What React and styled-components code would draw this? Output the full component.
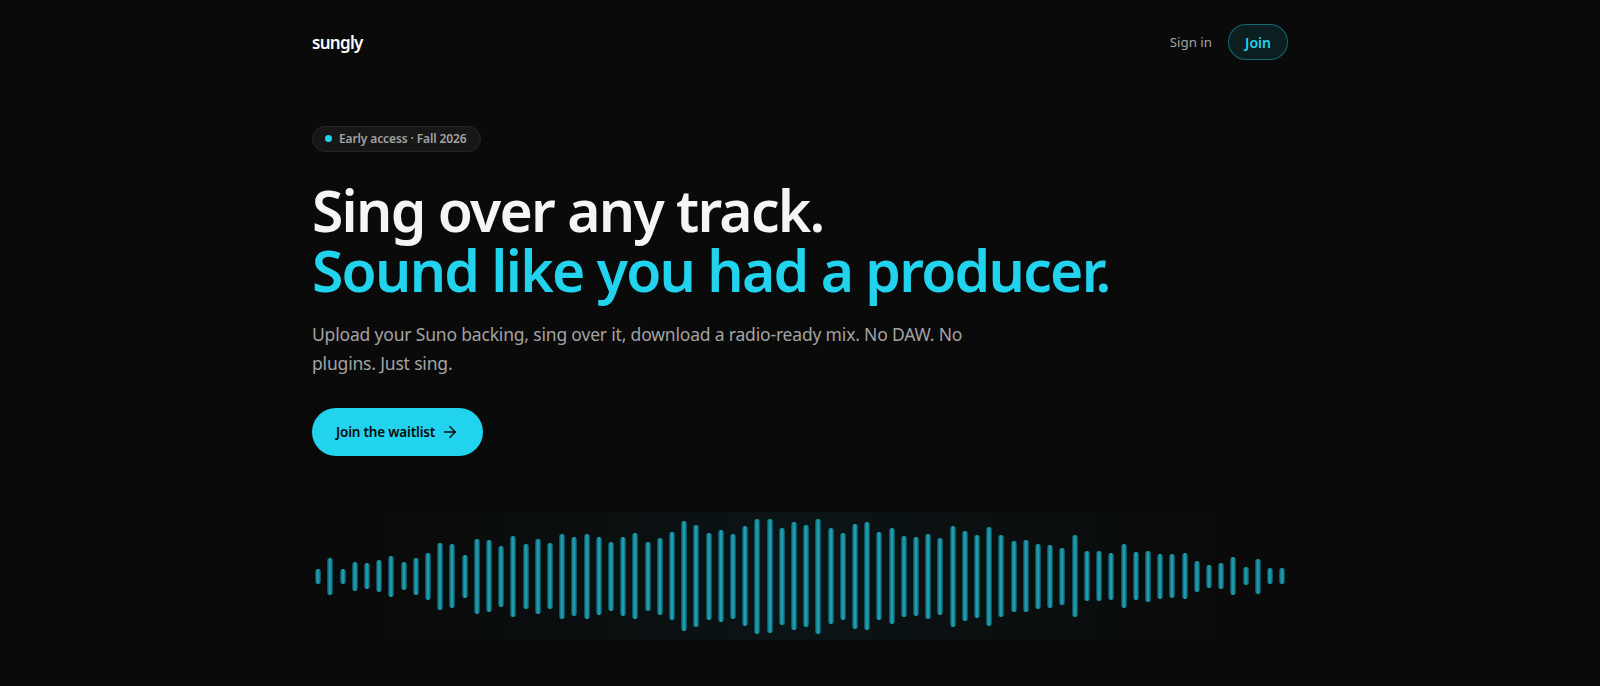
import React from 'react';
import styled, { createGlobalStyle } from 'styled-components';
import { ArrowRight } from 'lucide-react';

const BAR_HEIGHTS = [
  15, 37, 15, 29, 26, 32, 41, 28, 37, 47, 67, 64, 43, 75, 72, 61, 81, 65, 75, 66,
  85, 79, 85, 78, 69, 79, 86, 69, 77, 88, 110, 102, 87, 92, 85, 100, 115, 114, 97, 108,
  102, 115, 96, 87, 105, 108, 88, 96, 81, 79, 85, 77, 101, 90, 83, 99, 82, 71, 72, 65,
  63, 57, 82, 50, 50, 47, 64, 48, 51, 45, 44, 46, 31, 23, 26, 38, 18, 35, 16, 16,
];

const GlobalStyle = createGlobalStyle`
  * {
    box-sizing: border-box;
  }

  body {
    margin: 0;
    background: #0a0a0a;
    color: #f5f5f5;
    font-family: "Noto Sans", "Open Sans", sans-serif;
  }
`;

const Page = styled.div`
  width: 976px;
  min-height: 686px;
  margin: 0 auto;
`;

const Header = styled.header`
  display: flex;
  align-items: center;
  justify-content: space-between;
  padding-top: 24px;
  height: 60px;
`;

const Logo = styled.div`
  font-size: 17px;
  font-weight: 600;
  letter-spacing: -0.7px;
  color: #fafafa;
`;

const Nav = styled.nav`
  display: flex;
  align-items: center;
  gap: 16px;
`;

const SignIn = styled.a`
  font-size: 13.3px;
  color: #a3a3a3;
`;

const JoinButton = styled.button`
  width: 60px;
  height: 36px;
  border: 1px solid rgba(34, 211, 238, 0.4);
  border-radius: 18px;
  background: rgba(34, 211, 238, 0.1);
  color: #22d3ee;
  font: 600 14px "Noto Sans", sans-serif;
  padding: 0;
`;

const Hero = styled.section`
  padding-top: 65px;
`;

const Badge = styled.div`
  display: inline-flex;
  align-items: center;
  gap: 7px;
  height: 26px;
  padding: 0 14px 0 12px;
  border: 1px solid #262626;
  border-radius: 13px;
  background: #171717;
  color: #a3a3a3;
  font-size: 12px;
  font-weight: 600;
  letter-spacing: -0.12px;
`;

const Dot = styled.span`
  width: 7px;
  height: 7px;
  border-radius: 50%;
  background: #22d3ee;
`;

const Headline = styled.h1`
  margin: 28px 0 0;
  font-size: 57px;
  line-height: 60px;
  font-weight: 600;
  letter-spacing: -1.73px;
  color: #f5f5f5;
`;

const Accent = styled.span`
  display: block;
  color: #22d3ee;
`;

const Lead = styled.p`
  margin: 20px 0 0;
  max-width: 672px;
  font-size: 17.5px;
  line-height: 29.25px;
  letter-spacing: -0.18px;
  color: #a3a3a3;
`;

const Cta = styled.button`
  display: inline-flex;
  align-items: center;
  gap: 6px;
  height: 48px;
  margin-top: 30px;
  padding: 0 24px;
  border: 0;
  border-radius: 24px;
  background: #22d3ee;
  color: #0a0a0a;
  font: 600 13.5px "Noto Sans", sans-serif;
  letter-spacing: -0.18px;
`;

const Wave = styled.div`
  display: flex;
  align-items: center;
  height: 128px;
  margin-top: 56px;
  background: linear-gradient(
    90deg,
    transparent 6%,
    rgba(34, 211, 238, 0.02) 25%,
    rgba(34, 211, 238, 0.05) 50%,
    rgba(34, 211, 238, 0.02) 75%,
    transparent 94%
  );
`;

const BarSlot = styled.div`
  flex: 1;
  display: flex;
  justify-content: center;
`;

const Bar = styled.div`
  width: 6px;
  border-radius: 3px;
  background: linear-gradient(
    90deg,
    rgba(34, 211, 238, 0.25) 0%,
    rgba(34, 211, 238, 0.62) 30%,
    rgba(34, 211, 238, 0.8) 50%,
    rgba(34, 211, 238, 0.62) 70%,
    rgba(34, 211, 238, 0.25) 100%
  );
`;

export default function App() {
  return (
    <>
      <GlobalStyle />
      <Page>
        <Header>
          <Logo>sungly</Logo>
          <Nav>
            <SignIn>Sign in</SignIn>
            <JoinButton>Join</JoinButton>
          </Nav>
        </Header>
        <Hero>
          <Badge>
            <Dot />
            Early access · Fall 2026
          </Badge>
          <Headline>
            Sing over any track.
            <Accent>Sound like you had a producer.</Accent>
          </Headline>
          <Lead>
            Upload your Suno backing, sing over it, download a radio-ready mix. No DAW. No plugins.
            Just sing.
          </Lead>
          <Cta>
            Join the waitlist
            <ArrowRight size={18} strokeWidth={2} />
          </Cta>
          <Wave>
            {BAR_HEIGHTS.map((h, i) => (
              <BarSlot key={i}>
                <Bar style={{ height: h }} />
              </BarSlot>
            ))}
          </Wave>
        </Hero>
      </Page>
    </>
  );
}
